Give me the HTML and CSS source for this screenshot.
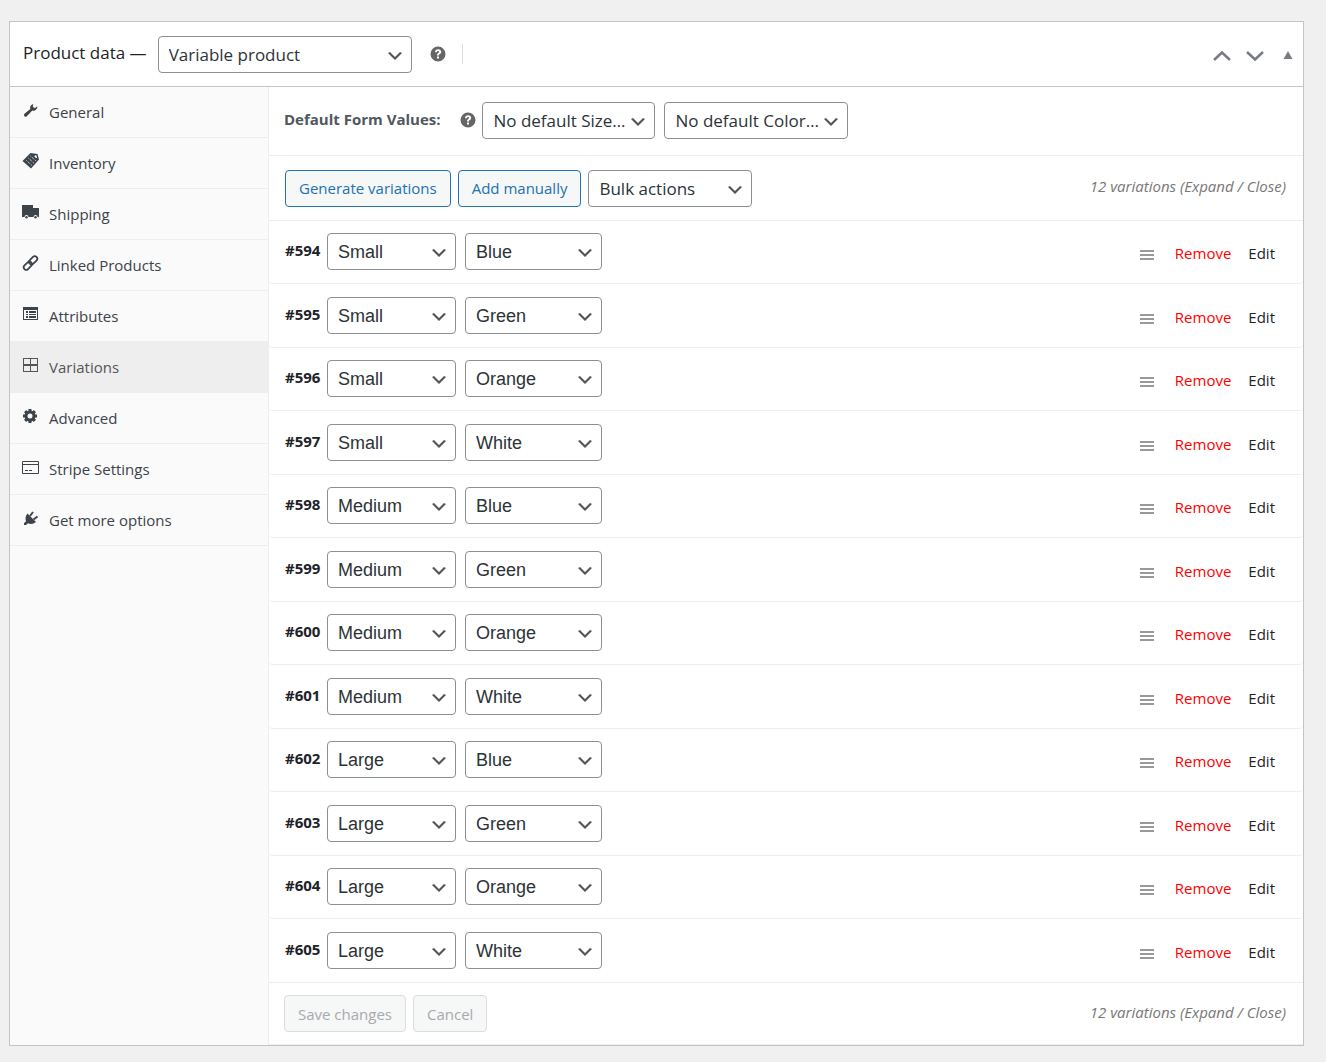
FILE: index.html
```html
<!DOCTYPE html>
<html lang="en">
<head>
    <meta charset="UTF-8">
    <meta name="viewport" content="width=device-width, initial-scale=1.0">
    <title>Product data</title>
    <link rel="stylesheet" href="styles.css">
</head>
<body>
    <!-- Shared icons -->
    <svg class="icon-defs" aria-hidden="true">
        <symbol id="icon-help" viewBox="0 0 16 16">
            <path fill-rule="evenodd" d="M8 .5a7.500 7.500 0 1 0 0 15a7.500 7.500 0 1 0 0-15zM5 6.200C5 4.300 6.300 3.200 8.100 3.200c1.800 0 3.100 1 3.100 2.600 0 1.200-.7 1.800-1.400 2.300-.6.400-.8.600-.8 1.200v.3H7v-.5c0-1.200.6-1.700 1.300-2.200.5-.4.800-.6.800-1.100 0-.5-.4-.8-1-.8-.7 0-1.100.5-1.100 1.200zM7 10.600h2v2H7z"/>
        </symbol>
        <symbol id="icon-handle" viewBox="0 0 14 10">
            <path d="M0 0h14v2H0zM0 4h14v2H0zM0 8h14v2H0z"/>
        </symbol>
    </svg>

    <div class="panel">
        <div class="panel-header">
            <label class="panel-title" for="product-type">Product data —</label>
            <select id="product-type" class="select select-type">
                <option>Variable product</option>
            </select>
            <svg class="icon-help"><use href="#icon-help"/></svg>
            <span class="divider"></span>
            <div class="panel-actions">
                <button type="button" aria-label="Move up">
                    <svg width="18" height="12" viewBox="0 0 18 12"><path class="chevron" d="M1 10l8-7.500 8 7.500"/></svg>
                </button>
                <button type="button" aria-label="Move down">
                    <svg width="18" height="12" viewBox="0 0 18 12"><path class="chevron" d="M1 2l8 7.500 8-7.500"/></svg>
                </button>
                <button type="button" class="toggle" aria-label="Toggle panel">
                    <svg width="10" height="12" viewBox="0 0 10 12"><path d="M5 1l4.500 8h-9z"/></svg>
                </button>
            </div>
        </div>

        <div class="panel-body">
            <ul class="tabs">
                <li><a href="#general">
                    <svg viewBox="0 0 18 18"><path d="M15.300 5.300l-2.500 2-2-1.500.5-2.900A4 4 0 0 0 8.300 8L2.500 12.800a1.600 1.600 0 0 0 2.300 2.400L10.300 9.500A3.900 3.900 0 0 0 15.300 5.300z"/></svg>
                    <span>General</span>
                </a></li>
                <li><a href="#inventory">
                    <svg viewBox="0 0 18 18"><path fill-rule="evenodd" d="M8.500 1L15.500 2l1.500 5.500L9 16.500.5 9zM13.200 3.200l-1 1.200 2.200 1.900.6-.8-.5-1.900z"/><path class="tag-lines" d="M8.500 4l5.500 5M6.500 6.200l5.500 5M4.500 8.500l5.500 5"/></svg>
                    <span>Inventory</span>
                </a></li>
                <li><a href="#shipping">
                    <svg viewBox="0 0 18 18"><path d="M0 2h11v3h6v9h-1.500a2 2 0 0 0-4 0H6.500a2 2 0 0 0-4 0H0z"/><circle cx="4.500" cy="14.200" r="1.200"/><circle cx="13.500" cy="14.200" r="1.200"/></svg>
                    <span>Shipping</span>
                </a></li>
                <li><a href="#linked">
                    <svg viewBox="0 0 18 18"><g class="line-icon line-thick" transform="rotate(-45 8.500 9)"><rect x="0" y="6.500" width="9.500" height="5" rx="2.500"/><rect x="7.500" y="6.500" width="9.500" height="5" rx="2.500"/></g></svg>
                    <span>Linked Products</span>
                </a></li>
                <li><a href="#attributes">
                    <svg viewBox="0 0 18 18"><path fill-rule="evenodd" d="M1 2h15v13H1zM2 5v9h13V5zM4 6h2v2H4zM7 6h7v2H7zM4 9h2v1H4zM7 9h7v1H7zM4 11h2v2H4zM7 11h7v2H7z"/></svg>
                    <span>Attributes</span>
                </a></li>
                <li class="active"><a href="#variations">
                    <svg viewBox="0 0 18 18"><path fill-rule="evenodd" d="M1 2h15v14H1zM2 3v5h6V3zM9 3v5h6V3zM2 10v5h6v-5zM9 10v5h6v-5z"/></svg>
                    <span>Variations</span>
                </a></li>
                <li><a href="#advanced">
                    <svg viewBox="0 0 18 18"><circle class="gear-ring" cx="8" cy="9" r="4"/><path class="gear-teeth" d="M8 2v3M8 13v3M1 9h3M12 9h3M3.100 4.100l2 2M10.900 11.900l2 2M3.100 13.900l2-2M10.900 6.100l2-2"/></svg>
                    <span>Advanced</span>
                </a></li>
                <li><a href="#stripe">
                    <svg viewBox="0 0 18 18"><path class="line-icon" d="M.5 3.500h16v12H.5zM.5 6.500h16M3 12.500h3M7 12.500h3"/></svg>
                    <span>Stripe Settings</span>
                </a></li>
                <li><a href="#more">
                    <svg viewBox="0 0 18 18"><path d="M5.500 4.500l8.500 8.500c-2.500 2-5.500 2.500-8 1.200L4 16H2v-1.800l2-2c-1-2.700-.5-5.500 1.500-7.700z"/><path class="plug-pins" d="M8 7l3-4M11.500 10.500l4-3"/></svg>
                    <span>Get more options</span>
                </a></li>
            </ul>

            <div class="content">
                <div class="toolbar toolbar-defaults">
                    <strong class="toolbar-label">Default Form Values:</strong>
                    <svg class="icon-help"><use href="#icon-help"/></svg>
                    <select class="select select-size" aria-label="Default size">
                        <option>No default Size…</option>
                    </select>
                    <select class="select select-color" aria-label="Default color">
                        <option>No default Color…</option>
                    </select>
                </div>

                <div class="toolbar toolbar-actions">
                    <button type="button" class="button">Generate variations</button>
                    <button type="button" class="button">Add manually</button>
                    <select class="select select-bulk" aria-label="Bulk actions">
                        <option>Bulk actions</option>
                    </select>
                    <div class="count">12 variations (<a href="#expand">Expand</a> / <a href="#close">Close</a>)</div>
                </div>

                <div id="variations" class="variations"></div>

                <div class="toolbar toolbar-footer">
                    <button type="button" class="button" disabled>Save changes</button>
                    <button type="button" class="button" disabled>Cancel</button>
                    <div class="count">12 variations (<a href="#expand">Expand</a> / <a href="#close">Close</a>)</div>
                </div>
            </div>
        </div>
    </div>

    <script src="script.js"></script>
</body>
</html>
```
FILE: styles.css
```css
* {
    box-sizing: border-box;
}

body {
    margin: 21px 22px 16px 9px;
    background-color: #f0f0f0;
    color: #1d2327;
    font-family: "Open Sans", "Noto Sans", sans-serif;
    font-size: 15px;
    line-height: 20px;
}

a {
    color: inherit;
    text-decoration: none;
}

svg {
    flex: none;
    fill: currentColor;
}

.icon-defs {
    position: absolute;
    width: 0;
    height: 0;
}

.panel {
    background-color: #fff;
    border: 1px solid #c3c4c7;
    box-shadow: 0 1px 1px rgba(0, 0, 0, 0.04);
}

/* Header */
.panel-header {
    display: flex;
    align-items: center;
    height: 65px;
    padding: 0 10px 0 13px;
    border-bottom: 1px solid #c3c4c7;
}

.panel-title {
    margin-right: 11px;
    padding-bottom: 2px;
    font-size: 17px;
}

.icon-help {
    width: 16px;
    height: 16px;
    color: #666;
}

.panel-header .icon-help {
    margin: 0 16px 0 18px;
}

.divider {
    height: 20px;
    border-left: 1px solid #dcdcde;
}

.panel-actions {
    display: flex;
    gap: 15px;
    margin-left: auto;
    padding-top: 3px;
    color: #787c82;
}

.panel-actions button {
    display: flex;
    padding: 0;
    border: none;
    background: none;
    color: inherit;
    cursor: pointer;
}

.panel-actions .toggle {
    margin-left: 4px;
}

.chevron {
    fill: none;
    stroke: currentColor;
    stroke-width: 2.5;
}

/* Form controls */
.select {
    height: 37px;
    padding: 0 28px 0 10px;
    border: 1px solid #8c8f94;
    border-radius: 4px;
    background: #fff url("data:image/svg+xml,%3Csvg xmlns='http://www.w3.org/2000/svg' viewBox='0 0 20 20'%3E%3Cpath d='M5 6l5 5 5-5 2 1-7 7-7-7 2-1z' fill='%23555'/%3E%3C/svg%3E") no-repeat right 6px top 9px;
    background-size: 20px;
    appearance: none;
    color: #2c3338;
    font-family: inherit;
    font-size: 17px;
    cursor: pointer;
}

.select-type {
    width: 254px;
}

.select-size {
    width: 173px;
}

.select-color {
    width: 184px;
}

.select-bulk {
    width: 164px;
}

.button {
    height: 37px;
    padding: 0 13px;
    border: 1px solid #2271b1;
    border-radius: 4px;
    background-color: #f6f7f7;
    color: #2271b1;
    font-family: inherit;
    font-size: 15px;
    cursor: pointer;
}

.button:disabled {
    border-color: #dcdcde;
    color: #a7aaad;
    cursor: default;
}

/* Tabs */
.panel-body {
    display: flex;
}

.tabs {
    flex: none;
    width: 259px;
    margin: 0;
    padding: 0;
    border-right: 1px solid #eee;
    background-color: #fafafa;
    list-style: none;
}

.tabs a {
    display: flex;
    align-items: center;
    gap: 9px;
    height: 51px;
    padding: 0 12px;
    border-bottom: 1px solid #eee;
    color: #3c434a;
}

.tabs svg {
    width: 18px;
    height: 18px;
    margin-bottom: 4px;
}

.tabs .active a {
    background-color: #eee;
    color: #555;
}

.line-icon {
    fill: none;
    stroke: currentColor;
    stroke-width: 1;
}

.line-thick {
    stroke-width: 1.75;
}

.tag-lines {
    stroke: #fafafa;
    stroke-width: 1;
    stroke-dasharray: 1 1;
}

.gear-ring {
    fill: none;
    stroke: currentColor;
    stroke-width: 3;
}

.gear-teeth {
    stroke: currentColor;
    stroke-width: 3;
}

.plug-pins {
    stroke: currentColor;
    stroke-width: 2;
}

/* Variations */
.content {
    flex: 1;
}

.toolbar {
    display: flex;
    align-items: center;
    height: 65px;
    padding: 0 17px 0 15px;
    border-bottom: 1px solid #eee;
}

.toolbar-defaults {
    height: 69px;
    padding-bottom: 2px;
}

.toolbar-label {
    margin-right: 20px;
    padding-bottom: 2px;
    color: #50575e;
}

.toolbar .select-size {
    margin: 0 9px 0 6px;
}

.toolbar-actions {
    gap: 7px;
    padding-left: 16px;
}

.toolbar-footer {
    gap: 7px;
    height: 62px;
}

.count {
    margin-left: auto;
    padding-bottom: 4px;
    color: #777;
    font-style: italic;
}

.variation {
    display: flex;
    align-items: center;
    padding: 13px 28px 13px 16px;
    border-bottom: 1px solid #eee;
    border-radius: 4px;
}

.variation:nth-child(odd) {
    padding-top: 12px;
}

.variation:last-child {
    border-radius: 0;
}

.variation strong {
    width: 42px;
    padding-bottom: 4px;
}

.variation .select {
    width: 129px;
    margin-right: 9px;
    font-family: "Liberation Sans", Arial, sans-serif;
    font-size: 18px;
}

.variation .select-value {
    width: 137px;
}

.variation-actions {
    display: flex;
    align-items: center;
    gap: 17px;
    margin-left: auto;
    padding-top: 2px;
}

.icon-handle {
    width: 14px;
    height: 10px;
    margin: 4px 4px 0 0;
    color: #999;
}

.remove {
    color: #f00;
}
```
FILE: script.js
```js
const sizes = ['Small', 'Medium', 'Large'];
const colors = ['Blue', 'Green', 'Orange', 'White'];
const firstId = 594;

function renderOptions(values, selected) {
    return values.map(value => `<option${value === selected ? ' selected' : ''}>${value}</option>`).join('');
}

// One row for every size and color pair
function renderVariations() {
    const list = document.getElementById('variations');
    let id = firstId;
    sizes.forEach(size => {
        colors.forEach(color => {
            const row = document.createElement('div');
            row.className = 'variation';
            row.innerHTML = `
                <strong>#${id}</strong>
                <select class="select" aria-label="Size">${renderOptions(sizes, size)}</select>
                <select class="select select-value" aria-label="Color">${renderOptions(colors, color)}</select>
                <div class="variation-actions">
                    <svg class="icon-handle"><use href="#icon-handle"/></svg>
                    <a class="remove" href="#remove-${id}">Remove</a>
                    <a href="#edit-${id}">Edit</a>
                </div>
            `;
            list.appendChild(row);
            id++;
        });
    });
}

renderVariations();
```
